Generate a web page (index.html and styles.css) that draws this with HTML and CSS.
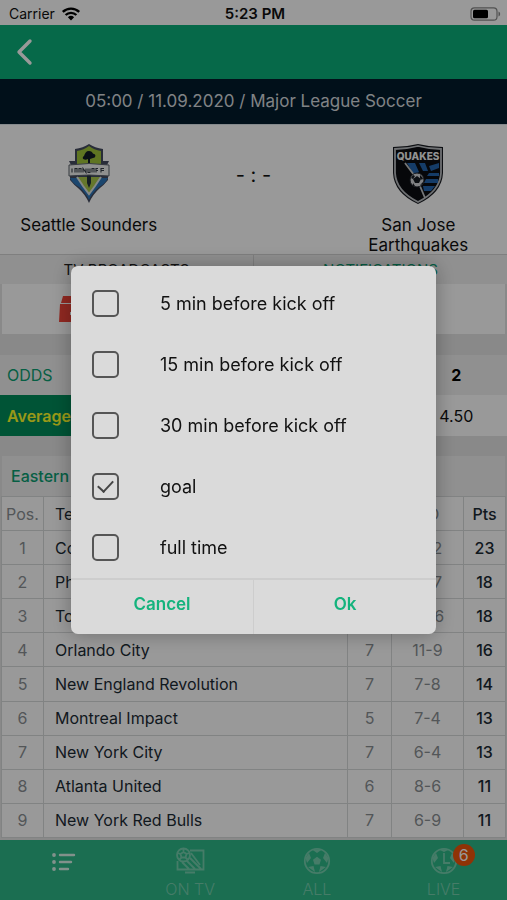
FILE: index.html
```html
<!DOCTYPE html>
<html lang="en">
<head>
    <meta charset="UTF-8">
    <meta name="viewport" content="width=device-width, initial-scale=1.0">
    <title>Seattle Sounders - San Jose Earthquakes</title>
    <link rel="stylesheet" href="styles.css">
</head>
<body>
    <div class="app">
        <div class="status-bar">
            <span class="carrier">Carrier
                <svg width="20" height="14" viewBox="0 0 20 14"><path d="M10 13.5L6.9 10.2a4.5 4.5 0 0 1 6.2 0z" fill="#000"/><path d="M4.6 8a7.8 7.8 0 0 1 10.8 0M1.8 4.9a11.8 11.8 0 0 1 16.4 0" fill="none" stroke="#000" stroke-width="2.4"/></svg>
            </span>
            <span class="clock">5:23 PM</span>
            <svg class="battery" width="31" height="14" viewBox="0 0 31 14"><rect x="1" y=".8" width="26" height="12.4" rx="3.5" fill="none" stroke="#888" stroke-width="1.2"/><rect x="3" y="2.7" width="15" height="8.6" rx="1.5"/><path d="M28.5 4.5c2.2.8 2.2 4.2 0 5z" fill="#888"/></svg>
        </div>

        <header class="header">
            <button class="back" aria-label="Back">
                <svg width="18" height="28" viewBox="0 0 18 28"><path d="M15 3L4 14l11 11" fill="none" stroke="#fff" stroke-width="3.4" stroke-linecap="round" stroke-linejoin="round"/></svg>
            </button>
        </header>
        <div class="match-date">05:00 / 11.09.2020 / Major League Soccer</div>

        <section class="match">
            <div class="team">
                <svg class="logo" width="44" height="60" viewBox="0 0 44 60">
                    <path d="M8 5q8-1 14-5 6 4 14 5v12h6l-3 6 2 4v9q-4 5-8 8-7 6-11 15-4-9-11-15-4-3-8-8v-9l2-4-3-6h6z" fill="#454b60"/>
                    <path d="M10 7q7-1 12-5 5 4 12 5v14H10z" fill="#9fc33a"/>
                    <path d="M3 34h38q-3 6-9 9-7 6-10 13-3-7-10-13-6-3-9-9z" fill="#2d75b8"/>
                    <path d="M10 33h24l-6 9-6 8-6-8z" fill="#a9c64a"/>
                    <path d="M10 33l6 9 6 8 6-8 6-9" fill="none" stroke="#dce4e6" stroke-width="2"/>
                    <path d="M22 7c4 0 3 3 5 3s2 4-1 4l-3 1v7h-2v-7c-4 2-7-1-4-3 1-3 2-5 5-5z" fill="#121c26"/>
                    <path d="M20 31h4v8l-2 5-2-5z" fill="#26343c"/>
                    <path d="M2 21q20-3 40 0v11q-20-2-40 0z" fill="#eef0ee" stroke="#59606a"/>
                    <path d="M5 28.5v-4m3 4v-4h2v4m2 0v-4h2v4m2 0v-4l3 4v-4m2 0v4h2v-4m2 4v-4h2v4m2 0v-4h2m-2 2h2m3 2v-4h3m-3 2h3" fill="none" stroke="#343c46" stroke-width="1.1"/>
                </svg>
                <span>Seattle Sounders</span>
            </div>
            <div class="score">- : -</div>
            <div class="team">
                <svg class="logo" width="52" height="62" viewBox="0 0 52 62">
                    <path d="M1 4q13 0 25-3 12 3 25 3v26q-1 20-25 31Q2 50 1 30z" fill="#171a20"/>
                    <path d="M3 6q12 0 23-3 11 3 23 3v24q-1 18-23 29Q4 48 3 30z" fill="#0a0c12" stroke="#b9bcc0" stroke-width="1.8"/>
                    <path d="M15 20h8l4 9-5 3zM27 20h6l3 8h-5zM37 23l10-3v5l-8 3zM37 30h10v3H35zM34 36h12v4H32zM31 43h12l-4 5h-7z" fill="#2465ad"/>
                    <path d="M13 20l12 16 8 19" fill="none" stroke="#c3c6c9" stroke-width="1.8"/>
                    <circle cx="25" cy="37" r="7" fill="#d6d8da" stroke="#20242b"/>
                    <path d="M25 33l4 3-2 4h-4l-2-4zM19 35l2-3 2 1-2 3zM28 32l3 3-1 2-2-2zM21 40l2 3-2 0zM28 42l3-3v2z" fill="#151920"/>
                    <text x="26" y="17" text-anchor="middle" class="logo-text">QUAKES</text>
                </svg>
                <span>San Jose Earthquakes</span>
            </div>
        </section>

        <nav class="tabs">
            <button>TV BROADCASTS</button>
            <button class="active">NOTIFICATIONS</button>
        </nav>
        <div class="broadcast">
            <svg width="40" height="28" viewBox="0 0 40 28"><path d="M4 1h32v7H2zM1 9h38v18H0z" fill="#f04438"/><path d="M11 17h9v3h-9z" fill="#fff"/></svg>
        </div>

        <table class="odds">
            <thead><tr><th>ODDS</th><th></th><th></th><th>2</th></tr></thead>
            <tbody><tr><th>Average</th><td></td><td></td><td>4.50</td></tr></tbody>
        </table>

        <h2 class="conference">Eastern</h2>
        <table class="standings">
            <colgroup><col class="col-pos"><col><col class="col-played"><col class="col-goals"><col class="col-points"></colgroup>
            <thead>
                <tr><th>Pos.</th><th>Team</th><th>P</th><th>GD</th><th>Pts</th></tr>
            </thead>
            <tbody>
                <tr><td>1</td><td>Columbus</td><td>9</td><td>11-2</td><td>23</td></tr>
                <tr><td>2</td><td>Philadelphia</td><td>9</td><td>11-7</td><td>18</td></tr>
                <tr><td>3</td><td>Toronto</td><td>9</td><td>15-6</td><td>18</td></tr>
                <tr><td>4</td><td>Orlando City</td><td>7</td><td>11-9</td><td>16</td></tr>
                <tr><td>5</td><td>New England Revolution</td><td>7</td><td>7-8</td><td>14</td></tr>
                <tr><td>6</td><td>Montreal Impact</td><td>5</td><td>7-4</td><td>13</td></tr>
                <tr><td>7</td><td>New York City</td><td>7</td><td>6-4</td><td>13</td></tr>
                <tr><td>8</td><td>Atlanta United</td><td>6</td><td>8-6</td><td>11</td></tr>
                <tr><td>9</td><td>New York Red Bulls</td><td>7</td><td>6-9</td><td>11</td></tr>
            </tbody>
        </table>

        <nav class="bottom-nav">
            <a href="#" class="current" aria-label="Menu">
                <svg width="28" height="28" viewBox="0 0 28 28"><g fill="currentColor"><circle cx="5" cy="8" r="1.9"/><circle cx="5" cy="15" r="1.9"/><circle cx="5" cy="22" r="1.9"/></g><path d="M11 8h14M11 15h11M11 22h8" stroke="currentColor" stroke-width="2.4" stroke-linecap="round"/></svg>
            </a>
            <a href="#">
                <svg width="30" height="28" viewBox="0 0 30 28" fill="none" stroke="currentColor" stroke-width="1.8"><path d="M15 3.5h13.500v19H2.500V14M10 25.500h10M15 11l11 11M12 14l8 8M7 15l7 7M16 6l9 12"/><circle cx="8.500" cy="8" r="6.500"/><path d="M8.500 5l3 2-1 3.500h-4L5.500 7zM8.500 2v3M11.500 7l3-1M10.500 10.500l2 2M6.500 10.500l-2 2M5.500 7l-3-1"/></svg>
                <span>ON TV</span>
            </a>
            <a href="#">
                <svg width="28" height="28" viewBox="0 0 28 28"><circle cx="14" cy="14" r="12.200" fill="none" stroke="currentColor" stroke-width="1.800"/><path d="M14 9.800l4 3-1.500 4.700h-5L10 12.800zM9 2.600h10L14 6zM2.500 11l3.500-5 2 5-4 5zM25.500 11L22 6l-2 5 4 5zM5 20l5.500-1 1.500 6zM23 20l-5.500-1-1.500 6z" fill="currentColor"/></svg>
                <span>ALL</span>
            </a>
            <a href="#">
                <svg width="28" height="28" viewBox="0 0 28 28"><circle cx="14" cy="14" r="12.200" fill="none" stroke="currentColor" stroke-width="1.800"/><path d="M9 2.600h10L14 5zM2.500 11l3.500-5 2 5-4 5zM25.500 11L22 6l-2 5 4 5zM5 20l5.500-1 1.500 6zM23 20l-5.500-1-1.500 6z" fill="currentColor"/><path d="M14 6v10h6" fill="none" stroke="currentColor" stroke-width="1.800"/></svg>
                <span>LIVE</span>
                <b class="badge">6</b>
            </a>
        </nav>
    </div>

    <div class="overlay">
        <form class="dialog" role="dialog" aria-label="Notifications">
            <div class="options">
                <label><input type="checkbox">5 min before kick off</label>
                <label><input type="checkbox">15 min before kick off</label>
                <label><input type="checkbox">30 min before kick off</label>
                <label><input type="checkbox" checked>goal</label>
                <label><input type="checkbox">full time</label>
            </div>
            <div class="actions">
                <button type="button">Cancel</button>
                <button type="button">Ok</button>
            </div>
        </form>
    </div>
</body>
</html>
```
FILE: styles.css
```css
* {
    box-sizing: border-box;
}
body {
    margin: 0;
    font-family: Inter, "Liberation Sans", sans-serif;
    font-size: 16px;
    color: #111;
    background-color: #e4e4e4;
}
button {
    font-family: inherit;
    padding: 0;
    border: 0;
    background: none;
    cursor: pointer;
}
svg {
    display: block;
}
.app {
    display: flex;
    flex-direction: column;
    height: 100vh;
    overflow: hidden;
}

/* top of the screen */
.status-bar {
    display: grid;
    grid-template-columns: 1fr auto 1fr;
    align-items: center;
    flex: none;
    height: 25px;
    padding: 2px 6px 0 9px;
    background-color: #fff;
    font-size: 14px;
}
.carrier {
    display: flex;
    align-items: center;
    gap: 6px;
}
.clock {
    font-size: 15px;
    font-weight: 600;
}
.battery {
    justify-self: end;
}
.header {
    display: flex;
    align-items: center;
    flex: none;
    height: 54px;
    padding: 0 15px;
    background-color: #0bb07a;
}
.match-date {
    flex: none;
    line-height: 45px;
    background-color: #031b2c;
    color: #d5dade;
    font-size: 17px;
    text-align: center;
}

/* match */
.match {
    display: flex;
    flex: none;
    height: 130px;
    border-top: 1px solid #dce4ea;
    background-color: #fff;
}
.team {
    display: flex;
    flex-direction: column;
    align-items: center;
    width: 35%;
    padding: 18px 16px 0;
    font-size: 17px;
    line-height: 20px;
    text-align: center;
}
.logo {
    flex: none;
    height: 62px;
    margin-bottom: 10px;
}
.logo-text {
    font-size: 10px;
    font-weight: 800;
    fill: #f4f4f4;
}
.score {
    flex: 1;
    padding-top: 38px;
    font-size: 20px;
    text-align: center;
}
.tabs {
    display: flex;
    flex: none;
    height: 30px;
    border-top: 1px solid #d4d4d4;
    background-color: #f0f0f0;
}
.tabs button {
    flex: 1;
    padding-bottom: 1px;
    font-size: 15px;
    color: #222;
}
.tabs .active {
    border-left: 1px solid #d4d4d4;
    color: #0b9e72;
}
.broadcast {
    flex: none;
    height: 50px;
    margin: 0 2px 21px;
    padding: 11px 57px;
    background-color: #fff;
}

/* odds */
.odds {
    flex: none;
    width: 100%;
    margin-bottom: 20px;
    border-collapse: collapse;
    table-layout: fixed;
    text-align: center;
}
.odds th,
.odds td {
    height: 41px;
    padding: 0;
}
.odds thead th {
    height: 40px;
    background-color: #f0f0f0;
    color: #000;
}
.odds th:first-child {
    width: 40%;
    padding-left: 7px;
    text-align: left;
}
.odds thead th:first-child {
    color: #0b9e72;
    font-weight: 400;
}
.odds tbody th {
    background-color: #008c5a;
    color: #ffff28;
    font-weight: 600;
}
.odds td {
    background-color: #fff;
}

/* standings */
.conference {
    flex: none;
    height: 40px;
    margin: 0 2px;
    padding-left: 9px;
    background-color: #f0f0f0;
    color: #0b9e72;
    font-size: 16px;
    font-weight: 500;
    line-height: 40px;
}
.standings {
    flex: 1;
    margin: 0 1px 2px;
    border-collapse: collapse;
    table-layout: fixed;
    background-color: #fff;
    color: #8a8f93;
    text-align: center;
}
.standings th,
.standings td {
    height: 34px;
    padding: 0;
    border: 1px solid #d8dadb;
    font-weight: 400;
}
.standings th:nth-child(2),
.standings td:nth-child(2) {
    padding-left: 11px;
    color: #1c2b35;
    text-align: left;
}
.standings th:last-child,
.standings td:last-child {
    color: #1c2b35;
    font-weight: 500;
}
.col-pos {
    width: 42px;
}
.col-played {
    width: 44px;
}
.col-goals {
    width: 72px;
}
.col-points {
    width: 42px;
}

/* bottom navigation */
.bottom-nav {
    display: flex;
    flex: none;
    height: 60px;
    background-color: #2db888;
}
.bottom-nav a {
    position: relative;
    display: flex;
    flex: 1;
    flex-direction: column;
    align-items: center;
    gap: 4px;
    padding-top: 7px;
    color: #75cfae;
    font-weight: 300;
    line-height: 20px;
    text-decoration: none;
}
.bottom-nav .current {
    color: #d9f2e8;
}
.badge {
    position: absolute;
    top: 4px;
    left: calc(50% + 9px);
    width: 22px;
    border-radius: 50%;
    background-color: #f0550a;
    color: #fff;
    font-weight: 400;
    line-height: 22px;
    text-align: center;
}

/* notifications dialog */
.overlay {
    position: fixed;
    inset: 0;
    display: flex;
    align-items: center;
    justify-content: center;
    background-color: rgba(0, 0, 0, .4);
}
.dialog {
    width: 72%;
    overflow: hidden;
    border-radius: 7px;
    background-color: #dadada;
    box-shadow: 0 0 20px rgba(0, 0, 0, .3);
}
.options {
    padding-top: 7px;
    border-bottom: 2px solid #cdcdcd;
}
.options label {
    display: flex;
    align-items: center;
    gap: 41px;
    height: 61px;
    padding-left: 21px;
    font-size: 18px;
}
.options input {
    appearance: none;
    display: grid;
    place-items: center;
    width: 27px;
    height: 27px;
    margin: 0;
    border: 2px solid #555;
    border-radius: 5px;
}
.options input:checked::before {
    content: "";
    width: 13px;
    height: 7px;
    border: solid #444;
    border-width: 0 0 2px 2px;
    transform: translateY(-2px) rotate(-47deg);
}
.actions {
    display: flex;
    height: 54px;
}
.actions button {
    flex: 1;
    padding-bottom: 6px;
    color: #14b37d;
    font-size: 17px;
    font-weight: 600;
}
.actions button + button {
    border-left: 1px solid #cdcdcd;
}
```
